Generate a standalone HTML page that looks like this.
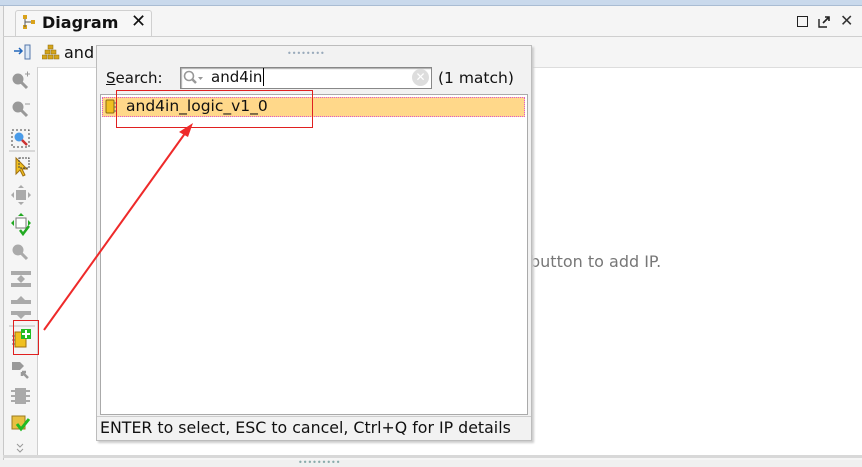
<!DOCTYPE html>
<html><head><meta charset="utf-8"><style>
*{margin:0;padding:0;box-sizing:border-box}
body{width:862px;height:466px;overflow:hidden;background:#f0f0f0;font-family:"DejaVu Sans","Liberation Sans",sans-serif;position:relative}
.a{position:absolute;white-space:nowrap}
</style></head><body>
<div class="a" style="left:0;top:0;width:862px;height:6px;background:#c9d9ec;border-bottom:1px solid #a9bcd3"></div>
<div class="a" style="left:3px;top:6px;width:859px;height:454px;background:#f5f5f5;border-left:1px solid #c8c8c8"></div>
<div class="a" style="left:15px;top:10px;width:137px;height:27px;background:#f7f7f7;border:1px solid #d0d0d0;border-bottom:none;border-radius:3px 3px 0 0"></div>
<svg class="a" style="left:22px;top:14px" width="16" height="16"><rect x="1" y="1" width="4" height="4" fill="#d9a21b"/><rect x="9" y="6" width="4" height="4" fill="#d9a21b"/><rect x="1" y="11" width="4" height="4" fill="#d9a21b"/><path d="M3 5v8M3 8h6" stroke="#555" fill="none"/></svg>
<div class="a" style="left:42px;top:13px;font-size:16px;font-weight:bold;color:#111">Diagram</div>
<div class="a" style="left:131px;top:11px;font-size:18px;color:#111">✕</div>
<div class="a" style="left:3px;top:36px;width:859px;height:1px;background:#cfcfcf"></div>
<div class="a" style="left:797px;top:16px;width:11px;height:11px;border:1.5px solid #222"></div>
<svg class="a" style="left:817px;top:15px" width="14" height="14"><path d="M2 4v8h8" stroke="#222" fill="none" stroke-width="1.4"/><path d="M6 8l6-6M8 2h4v4" stroke="#222" fill="none" stroke-width="1.6"/></svg>
<div class="a" style="left:840px;top:11px;font-size:16px;color:#333">✕</div>
<svg class="a" style="left:13px;top:43px" width="20" height="18"><path d="M1 8h8M6 5l3 3-3 3" stroke="#2266bb" fill="none" stroke-width="1.5"/><rect x="12" y="2" width="5" height="14" fill="#dce8f6" stroke="#5577aa"/></svg>
<svg class="a" style="left:42px;top:44px" width="18" height="16"><g fill="#d4a41a" stroke="#8a6a10" stroke-width=".5"><rect x="6" y="1" width="5" height="4"/><rect x="3" y="6" width="5" height="4"/><rect x="9" y="6" width="5" height="4"/><rect x="0" y="11" width="5" height="4"/><rect x="6" y="11" width="5" height="4"/><rect x="12" y="11" width="5" height="4"/></g></svg>
<div class="a" style="left:64px;top:43px;font-size:16px;color:#111">and</div>
<div class="a" style="left:37px;top:67px;width:1px;height:390px;background:#d0d0d0"></div>
<div class="a" style="left:38px;top:67px;width:824px;height:388px;background:#fff;border-top:1px solid #ddd"></div>
<div class="a" style="left:3px;top:455px;width:859px;height:3px;background:#d8d8d8"></div>
<div class="a" style="left:298px;top:458px;font-size:8px;color:#8aa">•••••••••</div>
<div class="a" style="left:530px;top:252px;font-size:16px;color:#777">button to add IP.</div>
<svg class="a" style="left:8px;top:68px" width="30" height="390">
<g fill="#999" stroke="#999">
<circle cx="10" cy="11" r="5"/><path d="M13 14l6 6" stroke-width="3"/><path d="M17 6h5M19.5 3.5v5" stroke-width="1"/>
<circle cx="10" cy="39" r="5"/><path d="M13 42l6 6" stroke-width="3"/><path d="M17 36h5" stroke-width="1"/>
</g>
<rect x="4" y="62" width="17" height="17" fill="none" stroke="#444" stroke-dasharray="2 2"/><circle cx="11" cy="69" r="4.5" fill="#4a9be8"/><path d="M14 72l5 5" stroke="#c33" stroke-width="2.5"/>
<path d="M1 83h26" stroke="#bbb"/>
<path d="M8 90v16l4-4 3 6 2-1-3-6h5z" fill="#f0c020" stroke="#a07010"/><rect x="11" y="90" width="10" height="10" fill="none" stroke="#444" stroke-dasharray="2 1"/>
<g fill="#aaa"><rect x="8" y="122" width="10" height="10"/><path d="M13 117l-3 3h6zM13 137l-3-3h6zM3 127l3-3v6zM23 127l-3-3v6z"/></g>
<rect x="8" y="150" width="10" height="10" fill="#fff" stroke="#777"/><g fill="#2a2"><path d="M13 145l-3 3h6zM3 155l3-3v6zM23 155l-3-3v6z"/><path d="M12 162l3 4 6-8" stroke="#2a2" stroke-width="2.5" fill="none"/></g>
<g fill="#aaa" stroke="#aaa"><circle cx="10" cy="182" r="5"/><path d="M13 185l6 6" stroke-width="3"/></g>
<g fill="#aaa"><rect x="3" y="203" width="20" height="4"/><rect x="3" y="215" width="20" height="4"/><path d="M13 207l-4 4h8zM13 215l-4-4h8z"/></g>
<g fill="#aaa"><rect x="3" y="232" width="20" height="4"/><rect x="3" y="243" width="20" height="4"/><path d="M13 228l-4 4h8zM13 251l-4-4h8z"/></g>
<path d="M1 258h26" stroke="#bbb"/>
<rect x="7" y="264" width="11" height="15" fill="#f0c020" stroke="#a07010"/><path d="M4 268h3M4 272h3M4 276h3" stroke="#666"/><rect x="13" y="261" width="10" height="10" fill="#2b2"/><path d="M18 262v8M14 266h8" stroke="#fff" stroke-width="2"/>
<g fill="#999"><path d="M4 294h8l4 4-4 4H4z"/><path d="M14 304l6 6M14 304h4M14 304v4" stroke="#999" stroke-width="2.5"/></g>
<rect x="7" y="320" width="11" height="16" fill="#aaa"/><path d="M3 323h4M3 328h4M3 333h4M18 323h4M18 328h4M18 333h4" stroke="#aaa" stroke-width="2"/>
<rect x="4" y="348" width="13" height="13" fill="#e8c040" stroke="#9a7a20"/><path d="M9 356l4 5 8-10" stroke="#2b2" stroke-width="3" fill="none"/>
<path d="M9 376l3 3 3-3M9 381l3 3 3-3" stroke="#999" fill="none"/>
</svg>
<div class="a" style="left:96px;top:45px;width:436px;height:396px;background:#f2f2f2;border:1px solid #bcbcbc;box-shadow:2px 2px 2px #ccc"></div>
<div class="a" style="left:287px;top:49px;font-size:8px;color:#9ab">••••••••</div>
<div class="a" style="left:106px;top:69px;font-size:15px;color:#111"><u>S</u>earch:</div>
<div class="a" style="left:180px;top:67px;width:252px;height:22px;background:#fff;border:1px solid #888;box-shadow:inset 1px 1px 1px #aaa"></div>
<svg class="a" style="left:183px;top:70px" width="26" height="16"><circle cx="6" cy="6" r="4.5" fill="none" stroke="#999" stroke-width="1.6"/><path d="M9 9l4 4" stroke="#999" stroke-width="2.5"/><path d="M15 7h5l-2.5 3z" fill="#999"/></svg>
<div class="a" style="left:211px;top:68px;font-size:15px;color:#111">and4in<span style="border-left:1px solid #000;margin-left:1px"></span></div>
<div class="a" style="left:412px;top:69px;width:17px;height:17px;border-radius:50%;background:#ddd;color:#fff;font-size:12px;text-align:center;line-height:17px">✕</div>
<div class="a" style="left:438px;top:69px;font-size:15.5px;color:#111">(1 match)</div>
<div class="a" style="left:100px;top:94px;width:428px;height:321px;background:#fff;border:1px solid #aaa"></div>
<div class="a" style="left:102px;top:97px;width:423px;height:20px;background:#ffd88a;border:1px dotted #e055d0"></div>
<svg class="a" style="left:104px;top:99px" width="16" height="16"><rect x="2" y="1" width="8" height="13" rx="1" fill="#f0c020" stroke="#8a6a10"/><path d="M10 4h3M10 8h3M10 12h3" stroke="#666"/></svg>
<div class="a" style="left:126px;top:97px;font-size:15.5px;color:#111">and4in_logic_v1_0</div>
<div class="a" style="left:97px;top:416px;width:434px;height:24px;border-top:1px solid #ccc"></div>
<div class="a" style="left:100px;top:418px;font-size:15.8px;color:#111">ENTER to select, ESC to cancel, Ctrl+Q for IP details</div>
<div class="a" style="left:116px;top:90px;width:197px;height:38px;border:1px solid #e02020"></div>
<div class="a" style="left:13px;top:320px;width:26px;height:35px;border:1px solid #e02020"></div>
<svg class="a" style="left:0;top:0" width="862" height="466"><path d="M44 330L186 132" stroke="#ee2a2a" stroke-width="2"/><path d="M193 123l-14 9 9 5z" fill="#ee2a2a"/></svg>
</body></html>
